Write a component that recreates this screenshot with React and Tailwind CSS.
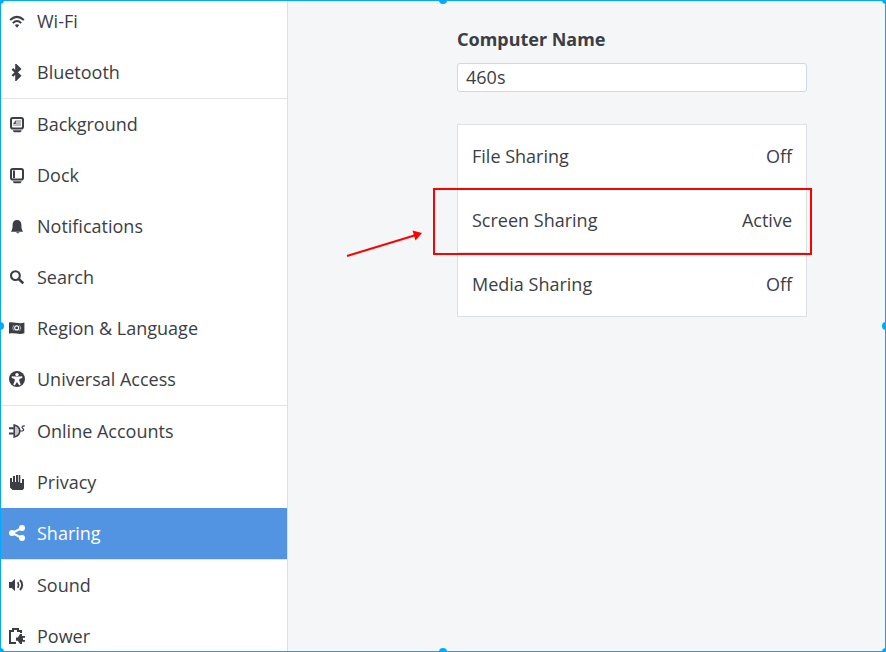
import React from "react";

function Icon({ children }) {
  return (
    <svg
      className="h-[17px] w-4 shrink-0"
      viewBox="0 0 16 17"
      fill="none"
      stroke="none"
      aria-hidden="true"
    >
      {children}
    </svg>
  );
}

const icons = {
  wifi: (
    <Icon>
      <path d="M1.2 7Q8 .7 14.8 7" stroke="currentColor" strokeWidth="2" />
      <path d="M3.8 10.1Q8 6 12.2 10.1" stroke="currentColor" strokeWidth="2" />
      <path d="M5.8 12.1Q8 10.2 10.2 12.1L8 14.8Z" fill="currentColor" />
    </Icon>
  ),
  bluetooth: (
    <Icon>
      <path d="M3.4 4.8L10.8 11.8L7.4 15.2V1.6L10.8 4.9L3.4 12" stroke="currentColor" strokeWidth="2.4" />
    </Icon>
  ),
  background: (
    <Icon>
      <rect x="2" y="2" width="12" height="10.6" rx="1.8" stroke="currentColor" strokeWidth="2" />
      <rect x="7" y="4" width="5" height="6" fill="currentColor" opacity=".35" />
      <rect x="4" y="9" width="3" height="1" fill="currentColor" opacity=".35" />
      <path d="M4 8.2L6.8 4V8.2Z" fill="currentColor" />
      <path d="M4 14.3H12.5V15.1L11.5 16.2H5L4 15.1Z" fill="currentColor" />
    </Icon>
  ),
  dock: (
    <Icon>
      <rect x="2" y="2" width="12" height="10.6" rx="1.8" stroke="currentColor" strokeWidth="2" />
      <path d="M5 3.6V11" stroke="currentColor" strokeWidth="2" />
      <path d="M4 14.3H12.5V15.1L11.5 16.2H5L4 15.1Z" fill="currentColor" />
    </Icon>
  ),
  bell: (
    <Icon>
      <path d="M8 2C4.9 2 3.6 4 3.6 7C3.6 10.3 3.2 11.8 2 13.8H14C12.8 11.8 12.4 10.3 12.4 7C12.4 4 11.1 2 8 2Z" fill="currentColor" />
      <path d="M7 14.3H10.6L9.7 15.2H8Z" fill="currentColor" />
    </Icon>
  ),
  search: (
    <Icon>
      <circle cx="6.4" cy="6.6" r="4.4" stroke="currentColor" strokeWidth="2.1" />
      <path d="M9.5 9.8L14.3 14.4" stroke="currentColor" strokeWidth="2.6" />
    </Icon>
  ),
  region: (
    <Icon>
      <path d="M0 2.5C4.5 1.4 10 4.5 15.4 2.6V13.3C10 15 5.2 12.3 0 13.8Z" fill="currentColor" />
      <circle cx="7.7" cy="7.9" r="2" stroke="white" strokeWidth="1.1" />
      <path d="M4.8 5.2Q2.6 8 4.8 10.6M10.6 5.2Q12.8 8 10.6 10.8" stroke="white" strokeWidth=".6" />
    </Icon>
  ),
  access: (
    <Icon>
      <circle cx="8" cy="8" r="8" fill="currentColor" />
      <circle cx="8" cy="3.6" r="1.7" fill="white" />
      <path d="M2.8 5.2L6.2 5.6H9.8L13.2 5.2V6.9L10.3 8.1V10L11.8 13.6L10.3 14.4L8 11L5.7 14.4L4.2 13.6L5.7 10V8.1L2.8 6.9Z" fill="white" />
    </Icon>
  ),
  accounts: (
    <Icon>
      <path d="M0 5.3H4.8M0 10.5H4.8" stroke="currentColor" strokeWidth="2" />
      <path d="M5.2 2V14.1Q10.8 12.6 10.8 8Q10.8 3.4 5.2 2Z" fill="currentColor" fillOpacity=".3" stroke="currentColor" strokeWidth="1.6" />
      <path d="M11 8H13.4C15 7.8 15 6.2 13.8 5.4C12.5 4.5 12.8 2.6 15.8 2.8" stroke="currentColor" strokeWidth="1.2" />
    </Icon>
  ),
  hand: (
    <Icon>
      <path d="M1 4H3V8H4V2H6V8H7V1H9V8H9.7V1H11.3V9H13V5H15V14.5L13.5 16H3.5L1 13.5Z" fill="currentColor" />
    </Icon>
  ),
  share: (
    <Icon>
      <path d="M13 3L3 8L13 13" stroke="currentColor" strokeWidth="2" />
      <circle cx="13" cy="3" r="3" fill="currentColor" />
      <circle cx="3" cy="8" r="3" fill="currentColor" />
      <circle cx="13" cy="13" r="3" fill="currentColor" />
    </Icon>
  ),
  sound: (
    <Icon>
      <path d="M0 5H2.6L6 2V14L2.6 11H0Z" fill="currentColor" />
      <path d="M8.8 5.2Q10.4 8 8.8 10.8" stroke="currentColor" strokeWidth="1.7" />
      <path d="M11 3Q15.4 8 11 13" stroke="currentColor" strokeWidth="1.9" />
    </Icon>
  ),
  power: (
    <Icon>
      <path d="M7 15H1V3H4V1H9V3H12V5" stroke="currentColor" strokeWidth="2" />
      <path d="M13 6V8H16V9.8H14V12H16V13.8H13V16H11L8.8 12.8H7V9.6H8.8L11 6Z" fill="currentColor" />
    </Icon>
  ),
};

const groups = [
  [
    ["Wi-Fi", "wifi"],
    ["Bluetooth", "bluetooth"],
  ],
  [
    ["Background", "background"],
    ["Dock", "dock"],
    ["Notifications", "bell"],
    ["Search", "search"],
    ["Region & Language", "region"],
    ["Universal Access", "access"],
  ],
  [
    ["Online Accounts", "accounts"],
    ["Privacy", "hand"],
    ["Sharing", "share"],
  ],
  [
    ["Sound", "sound"],
    ["Power", "power"],
  ],
];

const services = [
  ["File Sharing", "Off"],
  ["Screen Sharing", "Active"],
  ["Media Sharing", "Off"],
];

function Sidebar() {
  return (
    <nav className="w-72 shrink-0 overflow-hidden border-r border-[#dcdfe3] bg-white">
      <div className="-mt-1 divide-y divide-[#e2e3e5]">
        {groups.map((items) => (
          <ul key={items[0][0]}>
            {items.map(([label, icon]) => {
              const active = label === "Sharing";
              return (
                <li key={label}>
                  <button
                    type="button"
                    aria-current={active ? "page" : undefined}
                    className={
                      active
                        ? "flex h-[51px] w-full items-center gap-3 bg-[#5294e2] pl-[9px] text-left text-white"
                        : "flex h-[51px] w-full items-center gap-3 pl-[9px] text-left"
                    }
                  >
                    {icons[icon]}
                    <span className="pb-0.5">{label}</span>
                  </button>
                </li>
              );
            })}
          </ul>
        ))}
      </div>
    </nav>
  );
}

function Highlight() {
  return (
    <>
      <span className="pointer-events-none absolute -top-px -right-1.5 -bottom-[3px] -left-[25px] z-10 border-2 border-[#ff0000]" />
      <svg
        className="pointer-events-none absolute top-10 -left-28 h-7 w-20"
        viewBox="0 0 80 28"
        aria-hidden="true"
      >
        <path d="M1 27L70 6" stroke="#ff0000" strokeWidth="2" />
        <path d="M66.5 1.5L76 4L69.5 11.5Z" fill="#ff0000" />
      </svg>
    </>
  );
}

function SelectionFrame() {
  const dot = "absolute size-2 rounded-full bg-[#00aaff]";
  return (
    <div className="pointer-events-none absolute inset-0 z-20 overflow-hidden">
      <div className="absolute inset-0 border border-[#00aaff]" />
      <span className={`${dot} -top-1 -left-1`} />
      <span className={`${dot} -top-1 left-1/2 -translate-x-1/2`} />
      <span className={`${dot} -top-1 -right-1`} />
      <span className={`${dot} top-1/2 -left-1 -translate-y-1/2`} />
      <span className={`${dot} top-1/2 -right-1 -translate-y-1/2`} />
      <span className={`${dot} -bottom-1 -left-1`} />
      <span className={`${dot} -bottom-1 left-1/2 -translate-x-1/2`} />
      <span className={`${dot} -right-1 -bottom-1`} />
    </div>
  );
}

export default function App() {
  return (
    <div className="relative flex h-screen overflow-hidden bg-[#f5f6f8] font-['Open_Sans','Noto_Sans',sans-serif] text-[18px] leading-6 text-[#3b3e45]">
      <Sidebar />
      <main className="flex flex-1 justify-center pt-[27px] pl-[90px]">
        <div className="w-[350px]">
          <label
            htmlFor="computer-name"
            className="block font-['Noto_Sans','Open_Sans',sans-serif] font-bold"
          >
            Computer Name
          </label>
          <input
            id="computer-name"
            type="text"
            defaultValue="460s"
            className="mt-3 block h-[29px] w-full rounded-[3px] border border-[#cfd6e6] bg-white px-2 pb-0.5 outline-none"
          />
          <ul className="mt-8 divide-y divide-[#dcdfe3] border border-[#dcdfe3] bg-white">
            {services.map(([name, state]) => (
              <li key={name} className="relative">
                <button
                  type="button"
                  className="flex h-[63px] w-full items-center justify-between px-3.5 pb-0.5"
                >
                  <span>{name}</span>
                  <span>{state}</span>
                </button>
                {name === "Screen Sharing" && <Highlight />}
              </li>
            ))}
          </ul>
        </div>
      </main>
      <SelectionFrame />
    </div>
  );
}
